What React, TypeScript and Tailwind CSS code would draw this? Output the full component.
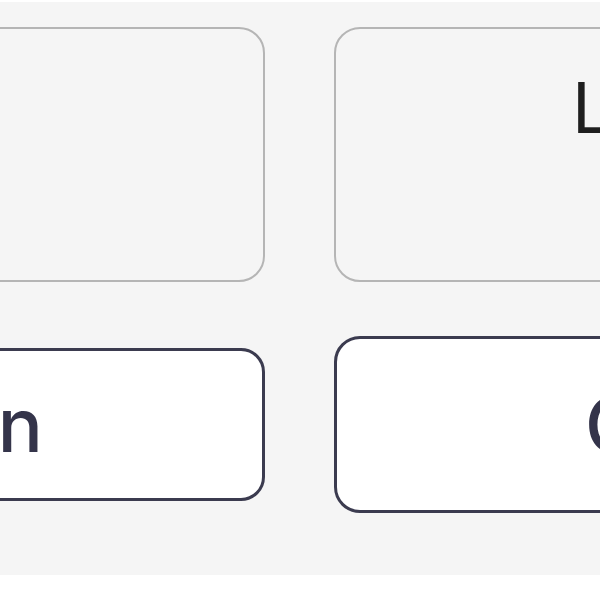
export default function App() {
  return (
    <div className="w-[600px] h-[600px] overflow-hidden bg-white" style={{ fontFamily: 'Inter, "Noto Sans", sans-serif' }}>
      <div className="mt-[2px] h-[573px] bg-[#f5f5f5] pt-[25px]">
        <div className="ml-[-135px] grid grid-cols-[400px_400px] gap-x-[69px] gap-y-[54px] items-center">
          <div className="h-[255px] rounded-[26px] border-2 border-[#b5b5b5]" />
          <div className="h-[255px] rounded-[26px] border-2 border-[#b5b5b5] pl-[236px] pt-[44px]">
            <span className="text-[70px] leading-none font-normal text-[#1f1f1f] whitespace-nowrap">Lorem</span>
          </div>

          <button className="h-[153px] rounded-[24px] border-[3px] border-[#3b3b4f] bg-white flex items-center justify-end pr-[219px]">
            <span className="text-[75px] leading-none font-medium text-[#34344a] whitespace-nowrap">Sign in</span>
          </button>
          <button className="h-[177px] rounded-[26px] border-[3px] border-[#3b3b4f] bg-white flex items-center justify-start pl-[248px]">
            <span className="text-[75px] leading-none font-medium text-[#34344a] whitespace-nowrap">Cancel</span>
          </button>
        </div>
      </div>
    </div>
  );
}
